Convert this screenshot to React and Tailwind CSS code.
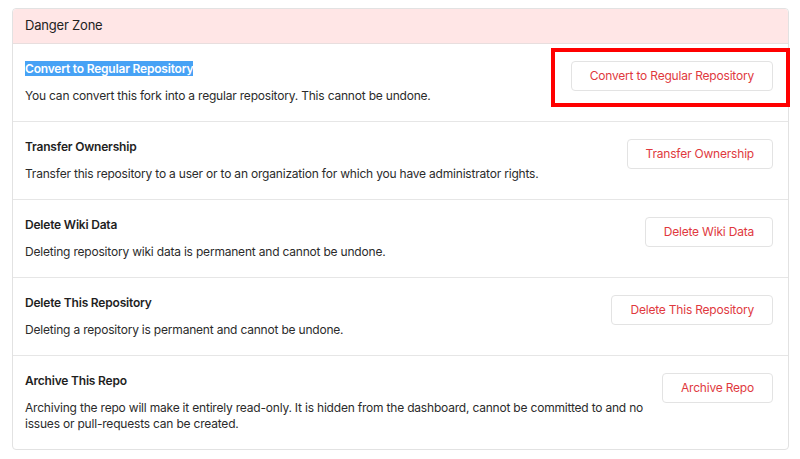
import React from "react";

const rows = [
  {
    title: "Convert to Regular Repository",
    desc: "You can convert this fork into a regular repository. This cannot be undone.",
    action: "Convert to Regular Repository",
    selected: true,
    boxed: true,
  },
  {
    title: "Transfer Ownership",
    desc: "Transfer this repository to a user or to an organization for which you have administrator rights.",
    action: "Transfer Ownership",
  },
  {
    title: "Delete Wiki Data",
    desc: "Deleting repository wiki data is permanent and cannot be undone.",
    action: "Delete Wiki Data",
  },
  {
    title: "Delete This Repository",
    desc: "Deleting a repository is permanent and cannot be undone.",
    action: "Delete This Repository",
  },
  {
    title: "Archive This Repo",
    desc: "Archiving the repo will make it entirely read-only. It is hidden from the dashboard, cannot be committed to and no issues or pull-requests can be created.",
    action: "Archive Repo",
  },
];

function DangerButton({ label }) {
  return (
    <button className="h-[30px] px-[18px] rounded-[4px] border border-[#e3e3e3] bg-white text-[12px] tracking-[-0.2px] text-[#e0393e] whitespace-nowrap">
      {label}
    </button>
  );
}

export default function App() {
  return (
    <div
      className="w-[800px] h-[459px] bg-white pt-[8px] pl-[12px] pr-[11px]"
      style={{ fontFamily: "Inter, 'Noto Sans', sans-serif" }}
    >
      <div className="border border-[#e2e2e2] rounded-[4px]">
        {/* header */}
        <div className="h-[35px] flex items-center px-[12px] bg-[#ffe6e6] border-b border-[#e8dede] rounded-t-[4px] text-[13px] tracking-[-0.2px] text-[#222]">
          Danger Zone
        </div>

        {rows.map((row, i) => (
          <div
            key={i}
            className={
              "flex items-start justify-between gap-4 pl-[12px] pr-[15px] pt-[17px] pb-[17px] " +
              (i < rows.length - 1 ? "border-b border-[#e6e6e6]" : "")
            }
          >
            <div className="flex flex-col gap-[11px]">
              <div className="h-[16px] leading-[16px] text-[12px] tracking-[-0.2px] font-semibold text-[#1f1f1f]">
                {row.selected ? (
                  <span className="bg-[#47a2f5] text-white">{row.title}</span>
                ) : (
                  row.title
                )}
              </div>
              <div className="text-[12px] tracking-[-0.2px] leading-[16px] text-[#2b2b2b]">
                {row.desc}
              </div>
            </div>

            {row.boxed ? (
              <div className="relative shrink-0">
                <DangerButton label={row.action} />
                {/* red annotation box */}
                <div className="absolute left-[-20px] right-[-17px] top-[-13px] bottom-[-16px] border-[4px] border-[#ff0000]" />
              </div>
            ) : (
              <div className="shrink-0">
                <DangerButton label={row.action} />
              </div>
            )}
          </div>
        ))}
      </div>
    </div>
  );
}
